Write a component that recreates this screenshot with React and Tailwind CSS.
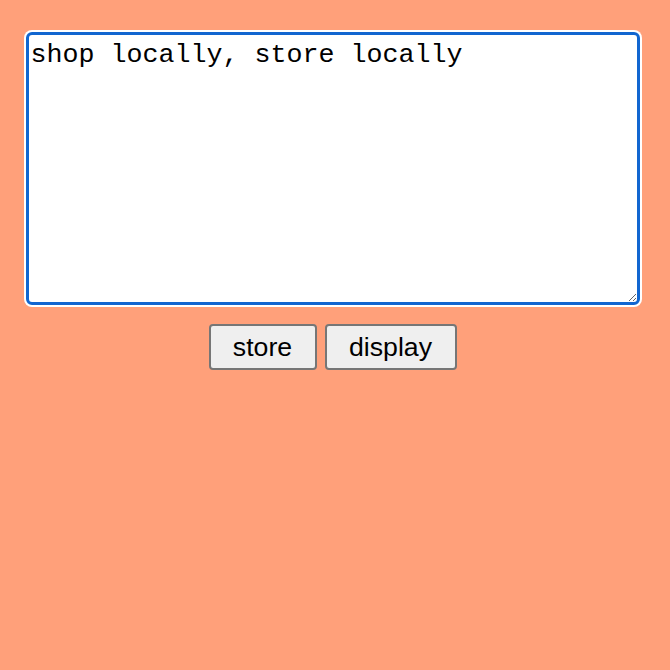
import React from 'react';

export default function App() {
  return (
    <div className="min-h-[670px] w-full bg-[#ffa07a] flex flex-col items-center pt-[30px] pr-[5px]">
      <div className="rounded-[8px] bg-white p-[2px]">
        <textarea
          defaultValue="shop locally, store locally"
          className="block w-[614px] h-[273px] rounded-[6px] border-[3px] border-[#1166d0] bg-white pl-[2px] pr-[2px] pt-[5px] pb-[2px] text-black outline-none"
          style={{ fontFamily: '"Liberation Mono", "Courier New", monospace', fontSize: '26.67px', lineHeight: '1.15' }}
        />
      </div>
      <div className="mt-[17px] flex gap-[8px]">
        <button className="h-[46px] w-[108px] rounded-[4px] border-2 border-[#767676] bg-[#efefef] text-[26.67px] leading-none text-black" style={{ fontFamily: '"Liberation Sans", Arial, sans-serif' }}>
          store
        </button>
        <button className="h-[46px] w-[132px] rounded-[4px] border-2 border-[#767676] bg-[#efefef] text-[26.67px] leading-none text-black" style={{ fontFamily: '"Liberation Sans", Arial, sans-serif' }}>
          display
        </button>
      </div>
    </div>
  );
}
